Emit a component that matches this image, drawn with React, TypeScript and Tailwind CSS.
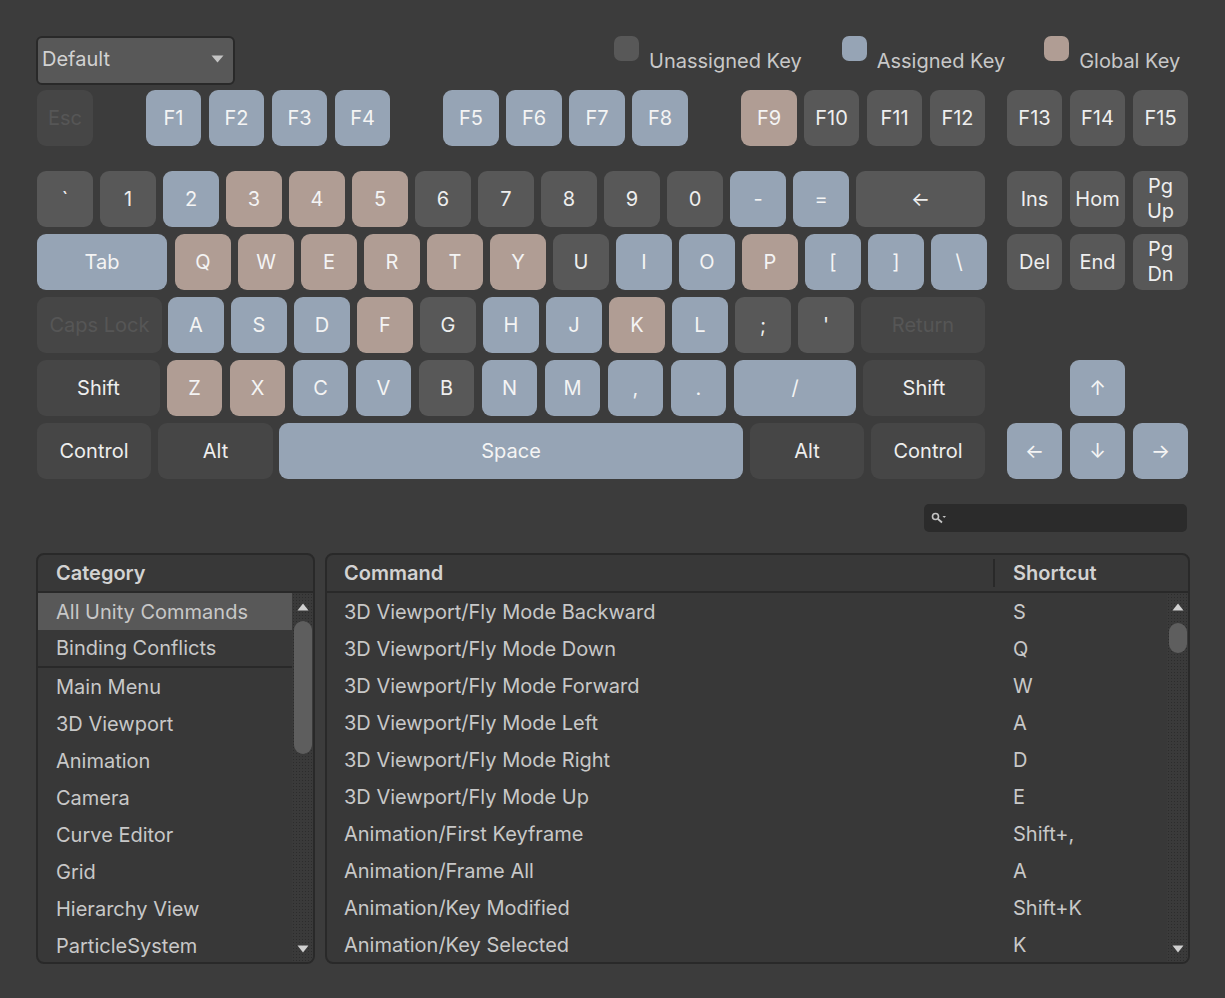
import React from "react";

type K = [string, string, ("u" | "a" | "g" | "d" | "x")?, string?];

const colors = {
  u: "bg-[#585858] text-[#eeeeee]",
  a: "bg-[#96a4b5] text-[#f4f4f4]",
  g: "bg-[#b09d94] text-[#f4f4f4]",
  d: "bg-[#464646] text-[#eeeeee]",
  x: "bg-[#464646] text-[#565656]",
};

function Key({ k }: { k: K }) {
  const [label, w, c = "u", extra = ""] = k;
  return (
    <div className={`h-[56px] shrink-0 rounded-[9px] flex items-center justify-center text-center whitespace-pre-line ${w} ${colors[c]} ${extra}`}>
      {label}
    </div>
  );
}

const W = "w-[56px]";
const N = "w-[55px]";

const fn1: K[] = [["F1", N, "a"], ["F2", N, "a"], ["F3", N, "a"], ["F4", N, "a"]];
const fn2: K[] = [["F5", W, "a"], ["F6", W, "a"], ["F7", W, "a"], ["F8", W, "a"]];
const fn4: K[] = [["F13", N], ["F14", N], ["F15", N]];

const pg: K = ["Pg\nUp", N, "u", "leading-[25px]"];
const pd: K = ["Pg\nDn", N, "u", "leading-[25px]"];

const numRow: K[] = [
  ["`", W], ["1", W], ["2", W, "a"], ["3", W, "g"], ["4", W, "g"], ["5", W, "g"], ["6", W], ["7", W], ["8", W], ["9", W], ["0", W], ["-", W, "a"], ["=", W, "a"], ["←", "w-[129px]"],
];
const qRow: K[] = [
  ["Tab", "w-[130px]", "a"], ["Q", W, "g"], ["W", W, "g"], ["E", W, "g"], ["R", W, "g"], ["T", W, "g"], ["Y", W, "g"], ["U", W], ["I", W, "a"], ["O", W, "a"], ["P", W, "g"], ["[", W, "a"], ["]", W, "a"], ["\\", W, "a"],
];
const aRow: K[] = [
  ["Caps Lock", "w-[125px]", "x"], ["A", W, "a", "-ml-px"], ["S", W, "a"], ["D", W, "a"], ["F", W, "g"], ["G", W], ["H", W, "a"], ["J", W, "a"], ["K", W, "g"], ["L", W, "a"], [";", W], ["'", W], ["Return", "w-[124px]", "x"],
];
const zRow: K[] = [
  ["Shift", "w-[123px]", "d"], ["Z", N, "g"], ["X", N, "g", "ml-px"], ["C", N, "a", "ml-px"], ["V", N, "a", "ml-px"], ["B", N, "u", "ml-px"], ["N", N, "a", "ml-px"], ["M", N, "a", "ml-px"], [",", N, "a", "ml-px"], [".", N, "a", "ml-px"], ["/", "w-[122px]", "a", "ml-px"], ["Shift", "w-[122px]", "d"],
];
const botRow: K[] = [
  ["Control", "w-[114px]", "d"], ["Alt", "w-[115px]", "d"], ["Space", "w-[464px]", "a", "-ml-px"], ["Alt", "w-[114px]", "d"], ["Control", "w-[114px]", "d"],
];

const categories = ["Main Menu", "3D Viewport", "Animation", "Camera", "Curve Editor", "Grid", "Hierarchy View", "ParticleSystem"];
const commands: [string, string][] = [
  ["3D Viewport/Fly Mode Backward", "S"],
  ["3D Viewport/Fly Mode Down", "Q"],
  ["3D Viewport/Fly Mode Forward", "W"],
  ["3D Viewport/Fly Mode Left", "A"],
  ["3D Viewport/Fly Mode Right", "D"],
  ["3D Viewport/Fly Mode Up", "E"],
  ["Animation/First Keyframe", "Shift+,"],
  ["Animation/Frame All", "A"],
  ["Animation/Key Modified", "Shift+K"],
  ["Animation/Key Selected", "K"],
];

const dither = "bg-[radial-gradient(#2c2c2c_0.6px,#3a3a3a_0.7px)] bg-[length:3px_3px]";

function Scrollbar({ thumb }: { thumb: string }) {
  return (
    <div className={`w-[21px] shrink-0 flex flex-col items-center ${dither}`}>
      <svg width="12" height="8" viewBox="0 0 12 8" className="mt-[10px] shrink-0"><path d="M6 0.5 L11.5 7.5 L0.5 7.5 Z" fill="#d0d0d0" /></svg>
      <div className={`w-[18px] rounded-[9px] bg-[#5e5e5e] shrink-0 ${thumb}`} />
      <div className="flex-1" />
      <svg width="12" height="8" viewBox="0 0 12 8" className="mb-[9px] shrink-0"><path d="M0.5 0.5 L11.5 0.5 L6 7.5 Z" fill="#d0d0d0" /></svg>
    </div>
  );
}

function Legend({ c, label, sw, tx }: { c: string; label: string; sw: string; tx: string }) {
  return (
    <div className="flex items-start">
      <div className={`w-[25px] h-[25px] rounded-[7px] ${c} ${sw}`} />
      <div className={`text-[#c8c8c8] leading-[24px] mt-[13px] ${tx}`}>{label}</div>
    </div>
  );
}

export default function App() {
  return (
    <div className="w-[1225px] h-[998px] bg-[#3c3c3c] pt-[36px] pl-[37px] overflow-hidden text-[20px] text-[#c8c8c8] font-['Inter','Liberation_Sans',sans-serif]">
      <div className="flex h-[49px] w-[1152px]">
        <div className="-ml-px w-[199px] h-[49px] rounded-[6px] border-2 border-[#292929] bg-[#585858] flex items-center justify-between pl-[4px] pr-[9px] text-[#d2d2d2] pb-[3px]">
          <span>Default</span>
          <svg width="13" height="8" viewBox="0 0 13 8"><path d="M0.5 0.5 L12.5 0.5 L6.5 7.5 Z" fill="#c4c4c4" /></svg>
        </div>
        <div className="ml-[379px]"><Legend c="bg-[#585858]" label="Unassigned Key" sw="" tx="ml-[10px]" /></div>
        <div className="ml-[40px]"><Legend c="bg-[#96a4b5]" label="Assigned Key" sw="" tx="ml-[10px]" /></div>
        <div className="ml-[39px]"><Legend c="bg-[#b09d94]" label="Global Key" sw="" tx="ml-[10px]" /></div>
      </div>

      <div className="mt-[5px] flex w-[1151px]">
        <Key k={["Esc", W, "x"]} />
        <div className="ml-[53px] flex gap-[8px]">{fn1.map((k) => <Key key={k[0]} k={k} />)}</div>
        <div className="ml-[53px] flex gap-[7px]">{fn2.map((k) => <Key key={k[0]} k={k} />)}</div>
        <div className="ml-[53px] flex">
          <Key k={["F9", W, "g"]} />
          <Key k={["F10", N, "u", "ml-[7px]"]} />
          <Key k={["F11", N, "u", "ml-[8px]"]} />
          <Key k={["F12", N, "u", "ml-[8px]"]} />
        </div>
        <div className="ml-[22px] flex gap-[8px]">{fn4.map((k) => <Key key={k[0]} k={k} />)}</div>
      </div>

      <div className="mt-[25px] flex flex-col gap-[7px] w-[1151px]">
        <div className="flex justify-between">
          <div className="flex gap-[7px]">{numRow.map((k) => <Key key={k[0]} k={k} />)}</div>
          <div className="flex gap-[8px]"><Key k={["Ins", N]} /><Key k={["Hom", N]} /><Key k={pg} /></div>
        </div>
        <div className="flex justify-between">
          <div className="flex gap-[7px]">{qRow.map((k, i) => <Key key={k[0]} k={i === 1 ? [k[0], k[1], k[2], "ml-px"] : k} />)}</div>
          <div className="flex gap-[8px]"><Key k={["Del", N]} /><Key k={["End", N]} /><Key k={pd} /></div>
        </div>
        <div className="flex">
          <div className="flex gap-[7px]">{aRow.map((k) => <Key key={k[0]} k={k} />)}</div>
        </div>
        <div className="flex justify-between">
          <div className="flex gap-[7px]">{zRow.map((k, i) => <Key key={k[0] + i} k={k} />)}</div>
          <div className="w-[181px] flex justify-center"><Key k={["↑", N, "a"]} /></div>
        </div>
        <div className="flex justify-between">
          <div className="flex gap-[7px]">{botRow.map((k, i) => <Key key={k[0] + i} k={k} />)}</div>
          <div className="flex gap-[8px]"><Key k={["←", N, "a"]} /><Key k={["↓", N, "a"]} /><Key k={["→", N, "a"]} /></div>
        </div>
      </div>

      <div className="mt-[25px] w-[1150px] flex justify-end">
        <div className={`w-[263px] h-[28px] rounded-[5px] bg-[#2b2b2b] flex items-center pl-[7px]`}>
          <svg width="16" height="12" viewBox="0 0 16 12">
            <circle cx="4.5" cy="4.5" r="3" fill="none" stroke="#c4c4c4" strokeWidth="1.6" />
            <path d="M7 7 L11 10.5" stroke="#c4c4c4" strokeWidth="1.8" />
            <path d="M11.5 4 L15 4 L13.2 6 Z" fill="#c4c4c4" />
          </svg>
        </div>
      </div>

      <div className="-ml-px mt-[21px] w-[1154px] h-[411px] flex gap-[10px]">
        <div className="w-[279px] rounded-[8px] border-2 border-[#292929] bg-[#383838] flex flex-col overflow-hidden">
          <div className="h-[38px] shrink-0 flex items-center pl-[18px] font-semibold text-[#d2d2d2] border-b-2 border-[#292929]">Category</div>
          <div className="flex flex-1 min-h-0">
            <div className="flex-1 min-w-0">
              <div className="h-[37px] bg-[#585858] flex items-center pl-[18px]">All Unity Commands</div>
              <div className="h-[38px] flex items-center pl-[18px] border-b-2 border-[#292929]">Binding Conflicts</div>
              {categories.map((c) => (
                <div key={c} className="h-[37px] flex items-center pl-[18px]">{c}</div>
              ))}
            </div>
            <Scrollbar thumb="h-[133px] mt-[10px]" />
          </div>
        </div>
        <div className="w-[865px] rounded-[8px] border-2 border-[#292929] bg-[#383838] flex flex-col overflow-hidden">
          <div className="h-[38px] shrink-0 flex items-center font-semibold text-[#d2d2d2] border-b-2 border-[#292929]">
            <div className="w-[668px] pl-[17px] h-[28px] flex items-center border-r-2 border-[#292929]">Command</div>
            <div className="pl-[18px]">Shortcut</div>
          </div>
          <div className="flex flex-1 min-h-0">
            <div className="flex-1 min-w-0">
              {commands.map(([a, b]) => (
                <div key={a} className="h-[37px] flex items-center">
                  <div className="w-[668px] pl-[17px]">{a}</div>
                  <div className="pl-[18px]">{b}</div>
                </div>
              ))}
            </div>
            <Scrollbar thumb="h-[30px] mt-[12px]" />
          </div>
        </div>
      </div>
    </div>
  );
}
